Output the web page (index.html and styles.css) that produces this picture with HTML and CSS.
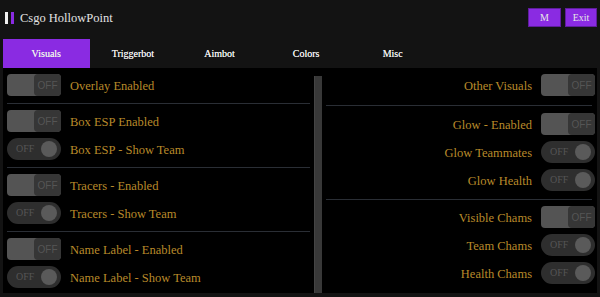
FILE: index.html
```html
<!DOCTYPE html>
<html lang="en">
<head>
  <meta charset="UTF-8" />
  <title>Csgo HollowPoint</title>
  <link rel="stylesheet" href="styles.css">
</head>
<body>

<header class="titlebar">
  <div class="logo"><span class="bar white"></span><span class="bar purple"></span></div>
  <div class="title">Csgo HollowPoint</div>
  <div class="win-buttons">
    <button class="win-btn">M</button>
    <button class="win-btn">Exit</button>
  </div>
</header>

<nav class="tabs">
  <div class="tab active">Visuals</div>
  <div class="tab">Triggerbot</div>
  <div class="tab">Aimbot</div>
  <div class="tab">Colors</div>
  <div class="tab">Misc</div>
</nav>

<main class="content">
  <section class="column left">
    <div class="row"><span class="toggle square"><span>OFF</span></span><span class="label">Overlay Enabled</span></div>
    <div class="sep"></div>
    <div class="row"><span class="toggle square"><span>OFF</span></span><span class="label">Box ESP Enabled</span></div>
    <div class="row"><span class="toggle round"><span>OFF</span></span><span class="label">Box ESP - Show Team</span></div>
    <div class="sep"></div>
    <div class="row"><span class="toggle square"><span>OFF</span></span><span class="label">Tracers - Enabled</span></div>
    <div class="row"><span class="toggle round"><span>OFF</span></span><span class="label">Tracers - Show Team</span></div>
    <div class="sep"></div>
    <div class="row"><span class="toggle square"><span>OFF</span></span><span class="label">Name Label - Enabled</span></div>
    <div class="row"><span class="toggle round"><span>OFF</span></span><span class="label">Name Label - Show Team</span></div>
  </section>

  <div class="divider"></div>

  <section class="column right">
    <div class="row"><span class="label">Other Visuals</span><span class="toggle square"><span>OFF</span></span></div>
    <div class="sep first"></div>
    <div class="row"><span class="label">Glow - Enabled</span><span class="toggle square"><span>OFF</span></span></div>
    <div class="row"><span class="label">Glow Teammates</span><span class="toggle round"><span>OFF</span></span></div>
    <div class="row"><span class="label">Glow Health</span><span class="toggle round"><span>OFF</span></span></div>
    <div class="sep"></div>
    <div class="row"><span class="label">Visible Chams</span><span class="toggle square"><span>OFF</span></span></div>
    <div class="row"><span class="label">Team Chams</span><span class="toggle round"><span>OFF</span></span></div>
    <div class="row"><span class="label">Health Chams</span><span class="toggle round"><span>OFF</span></span></div>
  </section>
</main>

</body>
</html>
```

FILE: styles.css
```css
html, body {
  margin: 0;
  background: #131313;
  font-family: 'Liberation Serif', 'Times New Roman', serif;
  overflow: hidden;
}
.titlebar {
  height: 36px;
  display: flex;
  align-items: center;
  padding: 0 3px 0 5px;
  margin-bottom: 3px;
}
.logo { display: flex; gap: 3px; }
.logo .bar { width: 3px; height: 12px; display: block; }
.logo .white { background: #f0f0f0; }
.logo .purple { background: #8a2be2; }
.title {
  margin-left: 6px;
  font-size: 12.5px;
  color: #e2e2e2;
}
.win-buttons {
  margin-left: auto;
  display: flex;
  gap: 4px;
  margin-top: -1px;
}
.win-btn {
  height: 19px;
  width: 33px;
  padding: 0;
  background: #8a2be2;
  border: 1px solid #5f1d9c;
  color: #e6e6e6;
  font-family: 'Liberation Serif', serif;
  font-size: 10px;
}
.win-btn + .win-btn { width: 32px; }
.tabs {
  display: flex;
  height: 29px;
  margin: 0 3px;
}
.tab {
  width: 86.6px;
  display: flex;
  align-items: center;
  justify-content: center;
  font-size: 10px;
  color: #ececec;
  text-shadow: 0 0 0.4px #ececec;
}
.tab.active { background: #8a2be2; }
.content {
  background: #000;
  margin: 0 3px;
  height: 225px;
  display: flex;
  padding: 6px 2px 0 4px;
  box-sizing: border-box;
}
.column {
  display: flex;
  flex-direction: column;
  gap: 6px;
}
.column.left { width: 303px; }
.column.right { flex: 1; }
.divider {
  width: 8px;
  margin: 2px 4px 0;
  background: #383838;
  border-left: 1px solid #444;
  box-sizing: border-box;
}
.row {
  height: 22px;
  display: flex;
  align-items: center;
  gap: 9px;
}
.right .row { justify-content: flex-end; }
.sep {
  height: 1px;
  background: #2a2e35;
  margin-top: 1px;
}
.right .sep { margin: 2px 3px 0 0; }
.right .sep.first { margin: 3px 3px 1px 0; }
.label {
  font-size: 12.5px;
  color: #b98a2a;
  padding-top: 3px;
}
.toggle {
  width: 54px;
  height: 22px;
  flex: none;
  position: relative;
  box-sizing: border-box;
  font-size: 10px;
  color: #555;
}
.toggle.square {
  background: #545454;
  border-radius: 4px;
}
.toggle.square span {
  position: absolute;
  top: 0; right: 0;
  width: 27px;
  height: 22px;
  background: #363636;
  border-radius: 4px;
  display: flex;
  align-items: center;
  justify-content: center;
  font-family: 'Liberation Sans', sans-serif;
}
.toggle.round {
  background: #2e2e2e;
  border-radius: 11px;
}
.toggle.round::after {
  content: '';
  position: absolute;
  top: 3px; right: 4px;
  width: 16px; height: 16px;
  border-radius: 50%;
  background: #5a5a5a;
}
.toggle.round span {
  position: absolute;
  left: 9px;
  top: 0;
  line-height: 22px;
}
```
